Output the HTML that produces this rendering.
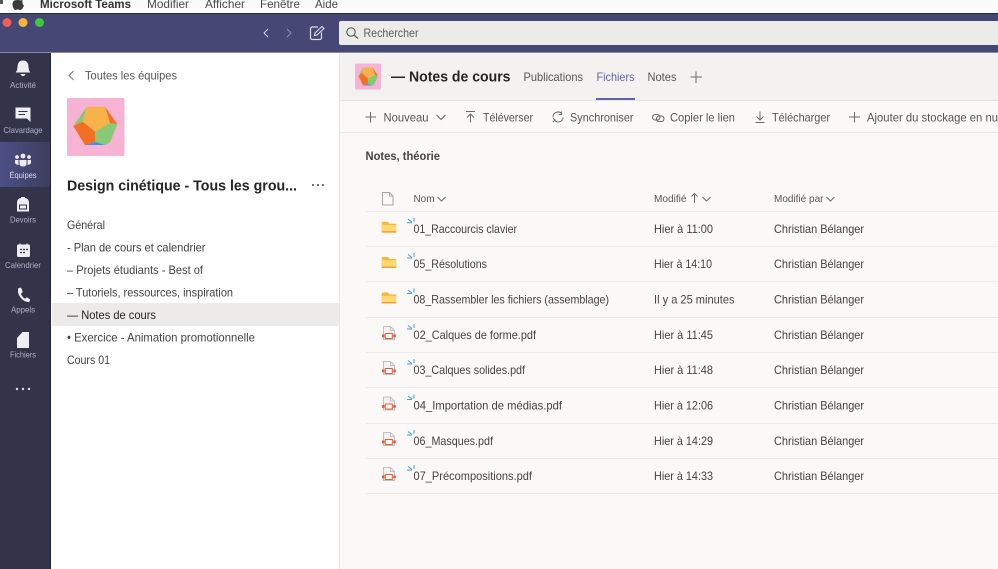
<!DOCTYPE html>
<html lang="fr">
<head>
<meta charset="utf-8">
<title>Microsoft Teams</title>
<style>
html,body{margin:0;padding:0;width:998px;height:569px;overflow:hidden;background:#fff}
svg{display:block;filter:blur(.35px)}
text{font-family:"Liberation Sans",sans-serif;font-size:12px;fill:#424242}
.rail{font-size:8.500px;fill:#b0b1c6;text-anchor:middle}
.menu{font-size:12px;fill:#4a4a4a}
.ln{stroke:#eceaea;stroke-width:1}
.ic{fill:none;stroke:#6b6b6b;stroke-width:1}
.wi{fill:#eeeef2}
</style>
</head>
<body>
<svg width="998" height="569" viewBox="0 0 998 569" xmlns="http://www.w3.org/2000/svg">
<defs>
<linearGradient id="act" x1="0" x2="1"><stop offset="0" stop-color="#4c4f86"/><stop offset="1" stop-color="#3d3e5e"/></linearGradient>
<g id="folder"><path d="M0 1Q0 0 1 0H6L8 2H14.500V10.800H0Z" fill="#f5b83d"/><path d="M0 3.300H14.500V9.500H0Z" fill="#fdd976"/><rect y="9.500" width="14.500" height="1.500" fill="#eea432"/></g>
<g id="sync"><path d="M0 5H5M1 1.500L5 4.500M7 0V4" fill="none" stroke="#3aa0e8" stroke-width="1"/></g>
<g id="pdf"><path d="M1.500 .5H8.500L12.500 4.500V13.500H1.500Z" fill="#f3f2f1" stroke="#c2c0bf" stroke-width="1"/><path d="M8.500 .5V4.500H12.500" fill="none" stroke="#c2c0bf"/><rect x="3.300" y="7.500" width="7" height="5" fill="#fff" stroke="#e8593a" stroke-width="1"/><rect x="0" y="8.500" width="2.600" height="2.800" fill="#e8593a"/><rect x="11.200" y="8.500" width="2.600" height="2.800" fill="#e8593a"/></g>
</defs>

<!-- backgrounds -->
<rect width="998" height="569" fill="#faf9f8"/>
<rect width="998" height="13" fill="#fbfbfb"/>
<rect y="13" width="998" height="1" fill="#26263a"/>
<rect y="14" width="998" height="38" fill="#464775"/>
<rect y="52" width="998" height="1" fill="#8a8aa8"/>
<rect y="53" width="51" height="516" fill="#33344a"/>
<rect y="142" width="50" height="45" fill="url(#act)"/>
<rect x="50" y="53" width="1" height="516" fill="#24243a"/>
<rect x="51" y="53" width="288" height="516" fill="#fff"/>
<rect x="339" y="53" width="1" height="516" fill="#e8e6e5"/>
<rect x="340" y="53" width="658" height="47" fill="#f3f2f1"/>
<rect x="340" y="100" width="658" height="1" fill="#e6e4e3"/>
<rect x="340" y="132" width="658" height="1" fill="#e9e7e6"/>

<!-- menu bar -->
<path d="M18 -.5C19.500 .8 20.500 .2 22.700 .3C22 2.500 22.800 4.700 24 5.500C23 8 21.800 10 20.300 10C19.200 10 18.800 9.400 17.900 9.400C17 9.400 16.400 10 15.500 10C14 10 12.500 7 12.500 4.300C12.500 1.500 14.300 .1 16 .1C16.800 .1 17.400 .5 18 -.5Z" fill="#3a3a3a"/>
<rect x="0" y="0" width="3" height="4" fill="#555"/>
<text class="menu" x="40" y="8" textLength="91" lengthAdjust="spacingAndGlyphs" style="fill:#333;font-weight:700">Microsoft Teams</text>
<text class="menu" x="147" y="8" textLength="42" lengthAdjust="spacingAndGlyphs">Modifier</text>
<text class="menu" x="205" y="8" textLength="40" lengthAdjust="spacingAndGlyphs">Afficher</text>
<text class="menu" x="260" y="8" textLength="40" lengthAdjust="spacingAndGlyphs">Fenêtre</text>
<text class="menu" x="315" y="8" textLength="23" lengthAdjust="spacingAndGlyphs">Aide</text>

<!-- title bar -->
<circle cx="7" cy="22.500" r="4.500" fill="#ee5f58"/>
<circle cx="23" cy="22.500" r="4.500" fill="#f6b53c"/>
<circle cx="39.500" cy="22.500" r="4.500" fill="#3cc83e"/>
<path d="M268 29L264 33L268 37" fill="none" stroke="#d5d5e3" stroke-width="1"/>
<path d="M287 29L291 33L287 37" fill="none" stroke="#9293b3" stroke-width="1"/>
<path d="M321.500 32.500V37.500Q321.500 39.500 319.500 39.500H312.500Q310.500 39.500 310.500 37.500V29Q310.500 27 312.500 27H318" fill="none" stroke="#dddde8" stroke-width="1.200"/>
<path d="M314.500 35.500L315 33L322 26.500L324 28.500L317 35Z" fill="none" stroke="#dddde8" stroke-width="1.100"/>
<rect x="339" y="21" width="670" height="24" rx="2" fill="#ebebea"/>
<circle cx="351" cy="32" r="4.200" fill="none" stroke="#555" stroke-width="1.100"/>
<path d="M354 35L358 38.500" stroke="#555" stroke-width="1.200"/>
<text x="363.500" y="37" textLength="55" lengthAdjust="spacingAndGlyphs" style="fill:#5c5c5c">Rechercher</text>

<!-- rail -->
<path d="M23 60.500Q28 60.500 28.500 66.500Q28.500 70 30.300 72.500H15.700Q17.500 70 17.500 66.500Q18 60.500 23 60.500Z" class="wi"/>
<path d="M20.500 74H25.500Q24.800 76 23 76Q21.200 76 20.500 74Z" class="wi"/>
<text class="rail" x="23" y="88" textLength="26" lengthAdjust="spacingAndGlyphs">Activité</text>

<path d="M15.500 107.500H30.500V122L27 118.500H15.500Z" class="wi"/>
<path d="M18.500 111.500H27.500M18.500 114.500H25" stroke="#33344a" stroke-width="1"/>
<text class="rail" x="23" y="133" textLength="39" lengthAdjust="spacingAndGlyphs">Clavardage</text>

<circle cx="23" cy="156" r="2.400" class="wi"/>
<circle cx="17" cy="157" r="1.900" class="wi"/>
<circle cx="29" cy="157" r="1.900" class="wi"/>
<path d="M19.500 160H26.500V164Q26.500 166.500 23 166.500Q19.500 166.500 19.500 164Z" class="wi"/>
<path d="M15 160H18.500V165Q15 164.500 15 162.500ZM27.500 160H31V162.500Q31 164.500 27.500 165Z" class="wi"/>
<text class="rail" x="23" y="178" textLength="27" lengthAdjust="spacingAndGlyphs" style="fill:#dcdce8">Équipes</text>

<path d="M17 203Q17 198.500 21 198V197H25V198Q29 198.500 29 203V211.500H17Z" class="wi"/>
<path d="M19.500 205H26.500V209H19.500Z" fill="none" stroke="#33344a" stroke-width="1"/>
<text class="rail" x="23" y="222.500" textLength="26" lengthAdjust="spacingAndGlyphs">Devoirs</text>

<rect x="17" y="244.500" width="13" height="12.500" rx="1.500" class="wi"/>
<path d="M20 243.500V246M27 243.500V246" stroke="#eeeef2" stroke-width="1.200"/>
<path d="M20 249.500H22M23 249.500H25M26 249.500H28M20 252.500H22M23 252.500H25" stroke="#33344a" stroke-width="1.300"/>
<text class="rail" x="23" y="268" textLength="36" lengthAdjust="spacingAndGlyphs">Calendrier</text>

<path d="M18.500 288L21 287.500L22.800 292L21 293.800Q22 297 25 298.800L26.800 297.200L30.200 299.500L29.500 301.700Q27.500 302.700 24 300.800Q19.500 297.800 18 292.500Q17.800 289.500 18.500 288Z" class="wi"/>
<text class="rail" x="23" y="312.500" textLength="24" lengthAdjust="spacingAndGlyphs">Appels</text>

<path d="M22.500 332H29V348H17V338Z" class="wi"/>
<text class="rail" x="23" y="357.500" textLength="26" lengthAdjust="spacingAndGlyphs">Fichiers</text>

<circle cx="17" cy="389" r="1.200" fill="#dcdce8"/>
<circle cx="23" cy="389" r="1.200" fill="#dcdce8"/>
<circle cx="29" cy="389" r="1.200" fill="#dcdce8"/>

<!-- left panel -->
<path d="M73.500 71L69 75.500L73.500 80" fill="none" stroke="#777" stroke-width="1"/>
<text x="85" y="79.500" textLength="92" lengthAdjust="spacingAndGlyphs" style="fill:#555">Toutes les équipes</text>

<rect x="67" y="98" width="57.500" height="58" rx="1.500" fill="#f6b3d3"/>
<path d="M86.700 106.700L73.300 126L82.700 121.700Z" fill="#88c975"/>
<path d="M105 106.700L117.300 124.300L110 123.300Z" fill="#f36f24"/>
<path d="M86.700 106.700H105L110 123.300L95 131.700L82.700 121.700Z" fill="#f7b24a"/>
<path d="M73.300 126L82.700 121.700L95 131.700V141.700L85 145Z" fill="#f36f24"/>
<path d="M110 123.300L117.300 124.300L110 142.300L105 145L95 141.700V131.700Z" fill="#88c975"/>
<path d="M85 145L95 141.700L105 145Z" fill="#4a90e2"/>

<text x="67" y="190.500" textLength="230" lengthAdjust="spacingAndGlyphs" style="font-size:14.500px;font-weight:700;fill:#252525">Design cinétique - Tous les grou...</text>
<circle cx="313" cy="185" r="1" fill="#444"/><circle cx="318" cy="185" r="1" fill="#444"/><circle cx="323" cy="185" r="1" fill="#444"/>

<rect x="52" y="303" width="287" height="23" fill="#edebe9"/>
<text x="67" y="229" textLength="38" lengthAdjust="spacingAndGlyphs">Général</text>
<text x="67" y="251.500" textLength="138.500" lengthAdjust="spacingAndGlyphs">- Plan de cours et calendrier</text>
<text x="67" y="274" textLength="136" lengthAdjust="spacingAndGlyphs">– Projets étudiants - Best of</text>
<text x="67" y="296.500" textLength="166" lengthAdjust="spacingAndGlyphs">– Tutoriels, ressources, inspiration</text>
<text x="67" y="319" textLength="89" lengthAdjust="spacingAndGlyphs" style="fill:#252525">— Notes de cours</text>
<text x="67" y="341.500" textLength="188" lengthAdjust="spacingAndGlyphs">• Exercice - Animation promotionnelle</text>
<text x="67" y="364" textLength="43" lengthAdjust="spacingAndGlyphs">Cours 01</text>

<!-- channel header -->
<rect x="355" y="63.500" width="26" height="26" rx="1.500" fill="#f6b3d3"/>
<path d="M363 67.500L358.500 76L362 73Z" fill="#88c975"/>
<path d="M372.500 67.500L378 76L375 75Z" fill="#f36f24"/>
<path d="M363 67.500H372.500L375 75L368 78.500L362 73Z" fill="#f7b24a"/>
<path d="M358.500 76L362 73L368 78.500V84L363 85.500Z" fill="#f36f24"/>
<path d="M375 75L378 76L374.500 84L373 85.500L368 84V78.500Z" fill="#88c975"/>
<path d="M363 85.500L368 84L373 85.500Z" fill="#4a90e2"/>
<text x="391" y="81.500" textLength="119.500" lengthAdjust="spacingAndGlyphs" style="font-size:14.500px;font-weight:700;fill:#252525">— Notes de cours</text>
<text x="523.500" y="81" textLength="59.500" lengthAdjust="spacingAndGlyphs" style="fill:#555">Publications</text>
<text x="596.500" y="81" textLength="38" lengthAdjust="spacingAndGlyphs" style="fill:#6264a7">Fichiers</text>
<text x="647.500" y="81" textLength="29" lengthAdjust="spacingAndGlyphs" style="fill:#555">Notes</text>
<rect x="596" y="98" width="39" height="2" fill="#6264a7"/>
<path d="M696 71.500V83M690.500 77H702" class="ic"/>

<!-- toolbar -->
<path d="M370.500 112V122.500M365.500 117H376" class="ic"/>
<text x="383.500" y="121.500" textLength="45" lengthAdjust="spacingAndGlyphs" style="fill:#555">Nouveau</text>
<path d="M436.500 115L441 119.500L445.500 115" class="ic"/>
<path d="M466 111.500H475M470.500 122.500V114M467 117.500L470.500 114L474 117.500" class="ic"/>
<text x="483" y="121.500" textLength="50" lengthAdjust="spacingAndGlyphs" style="fill:#555">Téléverser</text>
<path d="M553 117A5 5 0 0 1 562 114M563 117.500A5 5 0 0 1 554.500 120.500" class="ic"/>
<path d="M561.500 111.500V114.500H558.500M553 118L555 120L553 122" class="ic"/>
<text x="570" y="121.500" textLength="63.500" lengthAdjust="spacingAndGlyphs" style="fill:#555">Synchroniser</text>
<rect x="652.500" y="114.500" width="7.500" height="5.500" rx="2.700" class="ic"/>
<rect x="656.500" y="116" width="7.500" height="5.500" rx="2.700" class="ic"/>
<text x="670" y="121.500" textLength="65" lengthAdjust="spacingAndGlyphs" style="fill:#555">Copier le lien</text>
<path d="M755.500 122.500H764.500M760 111.500V120M756.500 116.500L760 120L763.500 116.500" class="ic"/>
<text x="772" y="121.500" textLength="58" lengthAdjust="spacingAndGlyphs" style="fill:#555">Télécharger</text>
<path d="M854.500 112V122.500M849 117H860" class="ic"/>
<text x="867" y="121.500" textLength="131" lengthAdjust="spacingAndGlyphs" style="fill:#555">Ajouter du stockage en nu</text>

<text x="365.500" y="160" textLength="74.500" lengthAdjust="spacingAndGlyphs" style="font-size:11.500px;font-weight:700;fill:#444">Notes, théorie</text>

<!-- table header -->
<path d="M382.500 192.500H389.500L393 196V205H382.500Z" fill="none" stroke="#a8a8a8"/>
<path d="M389.500 192.500V196H393" fill="none" stroke="#a8a8a8"/>
<text x="413.500" y="202" textLength="21" lengthAdjust="spacingAndGlyphs" style="font-size:10.500px;fill:#555">Nom</text>
<path d="M437.500 197L441.500 201L445.500 197" class="ic"/>
<text x="654" y="202" textLength="32.500" lengthAdjust="spacingAndGlyphs" style="font-size:10.500px;fill:#555">Modifié</text>
<path d="M694.500 203V193.500M691.500 196.500L694.500 193.500L697.500 196.500" class="ic"/>
<path d="M702.500 197L706.500 201L710.500 197" class="ic"/>
<text x="774" y="202" textLength="49.500" lengthAdjust="spacingAndGlyphs" style="font-size:10.500px;fill:#555">Modifié par</text>
<path d="M826.500 197L830.500 201L834.500 197" class="ic"/>

<!-- rows -->
<path class="ln" d="M366 211.500H998M366 246.500H998M366 281.500H998M366 317.500H998M366 352.500H998M366 387.500H998M366 423.500H998M366 458.500H998M366 493.500H998"/>

<use href="#folder" x="381.700" y="221.700"/><use href="#sync" x="407" y="217.700"/>
<text x="413.500" y="233" textLength="103.500" lengthAdjust="spacingAndGlyphs">01_Raccourcis clavier</text>
<text x="654" y="233" textLength="59" lengthAdjust="spacingAndGlyphs">Hier à 11:00</text>
<text x="774" y="233" textLength="90" lengthAdjust="spacingAndGlyphs">Christian Bélanger</text>

<use href="#folder" x="381.700" y="257"/><use href="#sync" x="407" y="253"/>
<text x="413.500" y="268" textLength="73.500" lengthAdjust="spacingAndGlyphs">05_Résolutions</text>
<text x="654" y="268" textLength="58" lengthAdjust="spacingAndGlyphs">Hier à 14:10</text>
<text x="774" y="268" textLength="90" lengthAdjust="spacingAndGlyphs">Christian Bélanger</text>

<use href="#folder" x="381.700" y="292.500"/><use href="#sync" x="407" y="288.500"/>
<text x="413.500" y="303.500" textLength="195.500" lengthAdjust="spacingAndGlyphs">08_Rassembler les fichiers (assemblage)</text>
<text x="654" y="303.500" textLength="80.500" lengthAdjust="spacingAndGlyphs">Il y a 25 minutes</text>
<text x="774" y="303.500" textLength="90" lengthAdjust="spacingAndGlyphs">Christian Bélanger</text>

<use href="#pdf" x="382" y="326"/><use href="#sync" x="407" y="324"/>
<text x="413.500" y="339" textLength="122.500" lengthAdjust="spacingAndGlyphs">02_Calques de forme.pdf</text>
<text x="654" y="339" textLength="59" lengthAdjust="spacingAndGlyphs">Hier à 11:45</text>
<text x="774" y="339" textLength="90" lengthAdjust="spacingAndGlyphs">Christian Bélanger</text>

<use href="#pdf" x="382" y="361"/><use href="#sync" x="407" y="359"/>
<text x="413.500" y="374" textLength="111.500" lengthAdjust="spacingAndGlyphs">03_Calques solides.pdf</text>
<text x="654" y="374" textLength="59" lengthAdjust="spacingAndGlyphs">Hier à 11:48</text>
<text x="774" y="374" textLength="90" lengthAdjust="spacingAndGlyphs">Christian Bélanger</text>

<use href="#pdf" x="382" y="396.500"/><use href="#sync" x="407" y="394.500"/>
<text x="413.500" y="409.500" textLength="148.500" lengthAdjust="spacingAndGlyphs">04_Importation de médias.pdf</text>
<text x="654" y="409.500" textLength="59" lengthAdjust="spacingAndGlyphs">Hier à 12:06</text>
<text x="774" y="409.500" textLength="90" lengthAdjust="spacingAndGlyphs">Christian Bélanger</text>

<use href="#pdf" x="382" y="432"/><use href="#sync" x="407" y="430"/>
<text x="413.500" y="445" textLength="79.500" lengthAdjust="spacingAndGlyphs">06_Masques.pdf</text>
<text x="654" y="445" textLength="59" lengthAdjust="spacingAndGlyphs">Hier à 14:29</text>
<text x="774" y="445" textLength="90" lengthAdjust="spacingAndGlyphs">Christian Bélanger</text>

<use href="#pdf" x="382" y="467"/><use href="#sync" x="407" y="465"/>
<text x="413.500" y="480" textLength="118.500" lengthAdjust="spacingAndGlyphs">07_Précompositions.pdf</text>
<text x="654" y="480" textLength="59" lengthAdjust="spacingAndGlyphs">Hier à 14:33</text>
<text x="774" y="480" textLength="90" lengthAdjust="spacingAndGlyphs">Christian Bélanger</text>
</svg>
</body>
</html>
